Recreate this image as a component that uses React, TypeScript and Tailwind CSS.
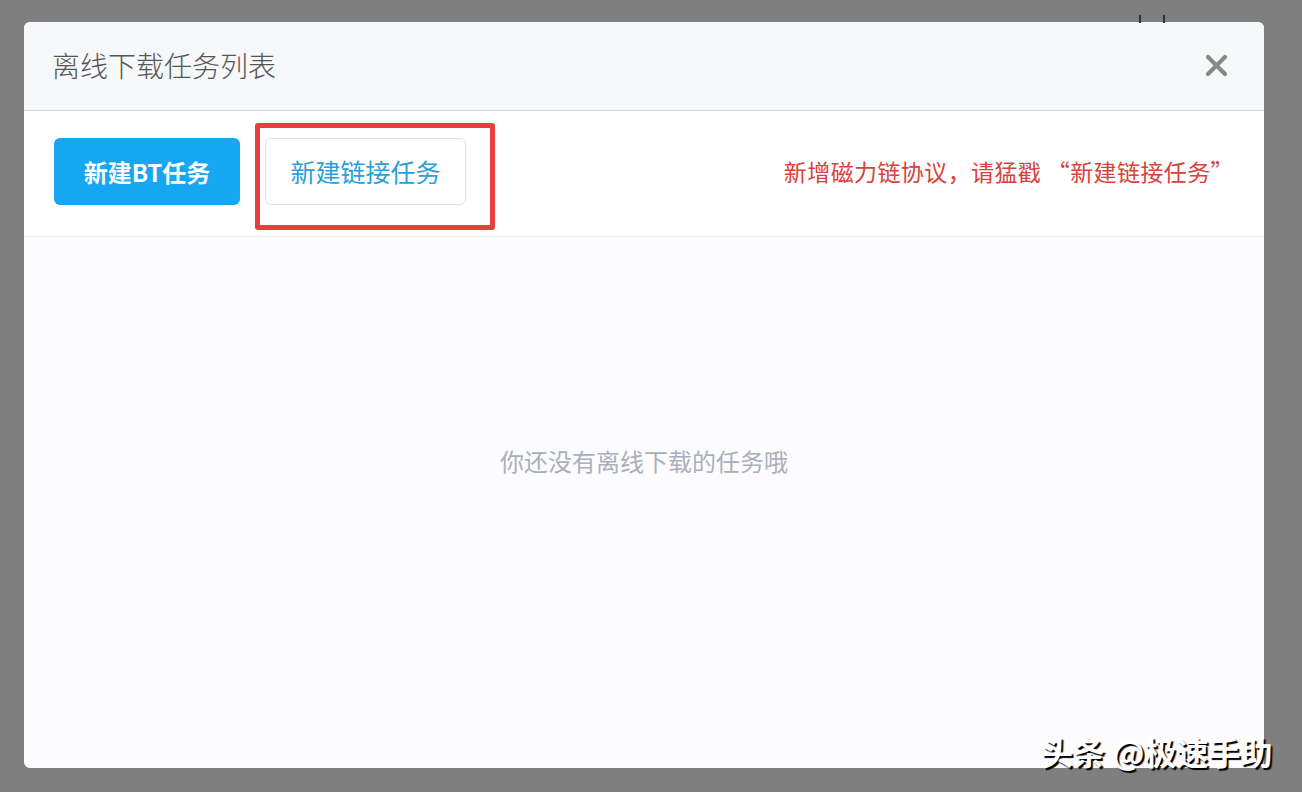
export default function App() {
  return (
    <div
      className="relative h-[792px] w-[1302px] overflow-hidden bg-[#7f7f7f] pt-[22px] pl-[24px]"
      style={{ fontFamily: '"Noto Sans CJK SC", "Noto Sans", sans-serif' }}
    >
      {/* stray marks above the dialog */}
      <span className="absolute left-[1139px] top-[15px] h-[8px] w-[2px] bg-[#333]" />
      <span className="absolute left-[1163px] top-[15px] h-[8px] w-[2px] bg-[#333]" />

      <div className="flex h-[746px] w-[1240px] flex-col overflow-hidden rounded-[6px] bg-[#fcfcfe]">
        <div className="flex h-[89px] items-center justify-between border-b border-[#c9dcea] bg-[#f6f8fa] pb-[3px] pl-[28px] pr-[36px]">
          <h1 className="text-[28px] font-light text-[#555]">离线下载任务列表</h1>
          <svg width="23" height="23" viewBox="0 0 23 23" className="mt-[2px]">
            <path d="M3 3 L20 20 M20 3 L3 20" stroke="#888" strokeWidth="4.2" strokeLinecap="round" />
          </svg>
        </div>

        <div className="flex h-[126px] items-center border-b border-[#eceef2] bg-white pb-[4px] pl-[30px] pr-[30px]">
          <button className="h-[67px] w-[186px] rounded-[6px] bg-[#16a6f2] text-[24px] font-bold text-white">
            新建BT任务
          </button>
          <div className="relative ml-[25px]">
            <button className="h-[67px] w-[201px] rounded-[6px] border border-[#dde1e6] bg-white text-[25px] text-[#2a9fdc]">
              新建链接任务
            </button>
            <span className="pointer-events-none absolute -left-[10px] -top-[15px] h-[107px] w-[240px] rounded-[3px] border-[5px] border-[#ec3d3d]" />
          </div>
          <p className="ml-auto text-[23px] tracking-[0.4px] text-[#d9413b]">新增磁力链协议，请猛戳 “新建链接任务”</p>
        </div>

        <div className="flex flex-1 justify-center pt-[210px]">
          <p className="text-[24px] leading-[28px] text-[#a9b0bb]">你还没有离线下载的任务哦</p>
        </div>
      </div>

      <div
        className="absolute left-[1041px] top-[727px] text-[32px] font-bold text-white"
        style={{ textShadow: "2px 2px 1px #000" }}
      >
        头条 @极速手助
      </div>
    </div>
  );
}
